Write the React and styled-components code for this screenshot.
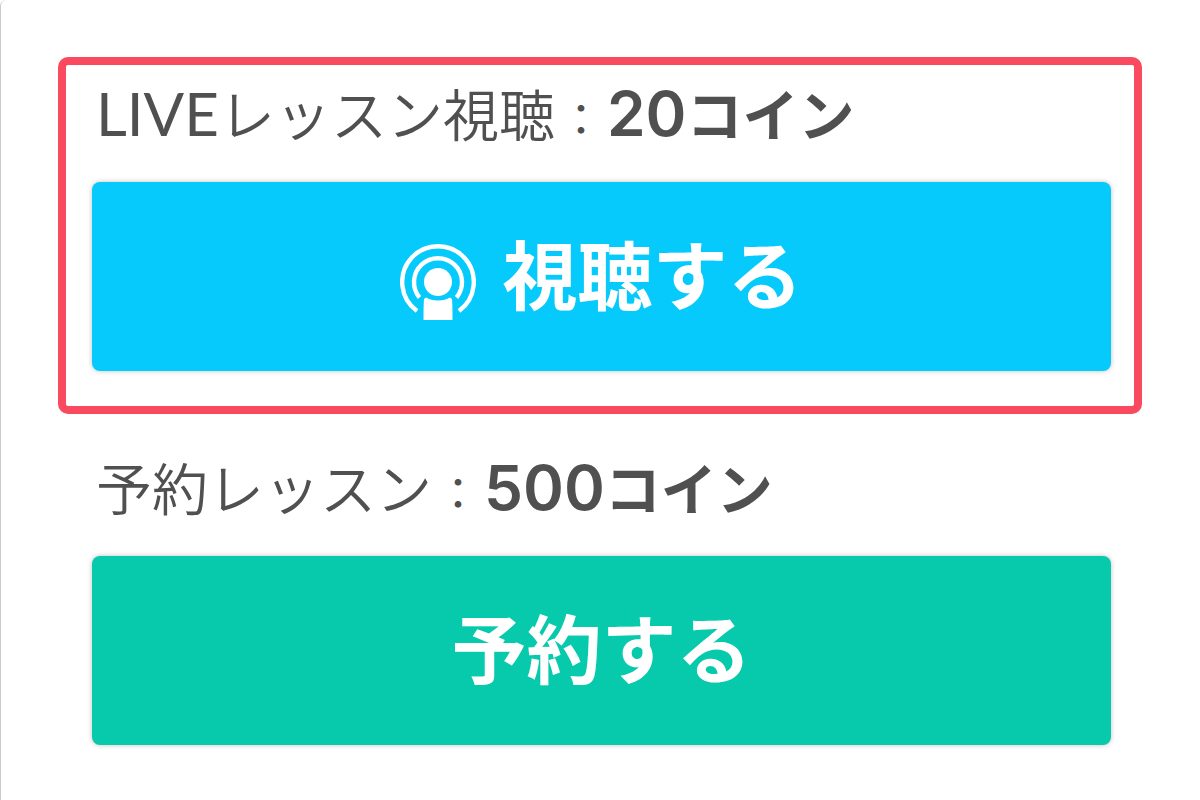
import React from "react";
import styled, { createGlobalStyle } from "styled-components";

const GlobalStyle = createGlobalStyle`
  * { box-sizing: border-box; }
  html { background: #ffffff; }
  body {
    margin: 0;
    color: #505050;
    font-family: "Noto Sans CJK JP", sans-serif;
  }
`;

const Card = styled.main`
  display: flex;
  flex-direction: column;
  gap: 17px;
  min-height: 100vh;
  padding: 57px 58px 0 57px;
  background: #ffffff;
  border-left: 1px solid #cccccc;
  border-top-left-radius: 6px;
`;

const Plan = styled.section`
  padding: 12px 23px 35px 26px;
  border: 8px solid ${(p) => (p.$highlighted ? "#fa4a5f" : "transparent")};
  border-radius: 10px;
`;

const Price = styled.p`
  margin: 0 0 35px;
  padding-left: 4px;
  font-size: 56px;
  font-weight: 350;
  line-height: 70px;
  white-space: nowrap;
`;

const Latin = styled.span`
  font-family: Lato, sans-serif;
  font-size: 60px;
  font-weight: 400;
  line-height: 1;
`;

const Colon = styled.span`
  display: inline-block;
  width: 52px;
  font-size: 44px;
  font-weight: 400;
  line-height: 1;
  text-align: center;
`;

const Coins = styled.strong`
  font-weight: 700;
`;

const Amount = styled.span`
  font-family: Inter, sans-serif;
  font-size: 62px;
  font-weight: 600;
  line-height: 1;
`;

const ActionButton = styled.button`
  display: block;
  width: 100%;
  height: 189px;
  padding: 0 0 10px;
  border: 0;
  border-radius: 8px;
  background: ${(p) => p.$color};
  box-shadow: 0 0 5px rgba(0, 0, 0, 0.25);
  color: #ffffff;
  font-family: inherit;
  font-size: 75px;
  font-weight: 700;
  line-height: 96px;
  cursor: pointer;
`;

const ButtonContent = styled.span`
  display: flex;
  align-items: flex-end;
  justify-content: center;
  gap: 26px;
`;

const Icon = styled.svg`
  display: block;
  width: 76px;
  height: 76px;
`;

function BroadcastIcon() {
  return (
    <Icon viewBox="0 0 76 76" aria-hidden="true">
      <g fill="none" stroke="#ffffff" strokeWidth="4.4">
        <path d="M17 67 A35.8 35.8 0 1 1 59 67" />
        <path d="M19.5 53.5 A24 24 0 1 1 56.5 53.5" />
      </g>
      <circle cx="38" cy="38" r="14" fill="#ffffff" />
      <path
        d="M26 53.5 Q31 56.5 38 56.5 Q45 56.5 50 53.5 L52 55 Q52.5 60 52.5 76 H23.5 Q23.5 60 24 55 Z"
        fill="#ffffff"
      />
    </Icon>
  );
}

export default function App() {
  return (
    <>
      <GlobalStyle />
      <Card>
        <Plan $highlighted>
          <Price>
            <Latin>LIVE</Latin>レッスン視聴<Colon>：</Colon>
            <Coins>
              <Amount>20</Amount>コイン
            </Coins>
          </Price>
          <ActionButton type="button" $color="#05cafb">
            <ButtonContent>
              <BroadcastIcon />
              視聴する
            </ButtonContent>
          </ActionButton>
        </Plan>
        <Plan>
          <Price>
            予約レッスン<Colon>：</Colon>
            <Coins>
              <Amount>500</Amount>コイン
            </Coins>
          </Price>
          <ActionButton type="button" $color="#07c9ab">
            <ButtonContent>予約する</ButtonContent>
          </ActionButton>
        </Plan>
      </Card>
    </>
  );
}
